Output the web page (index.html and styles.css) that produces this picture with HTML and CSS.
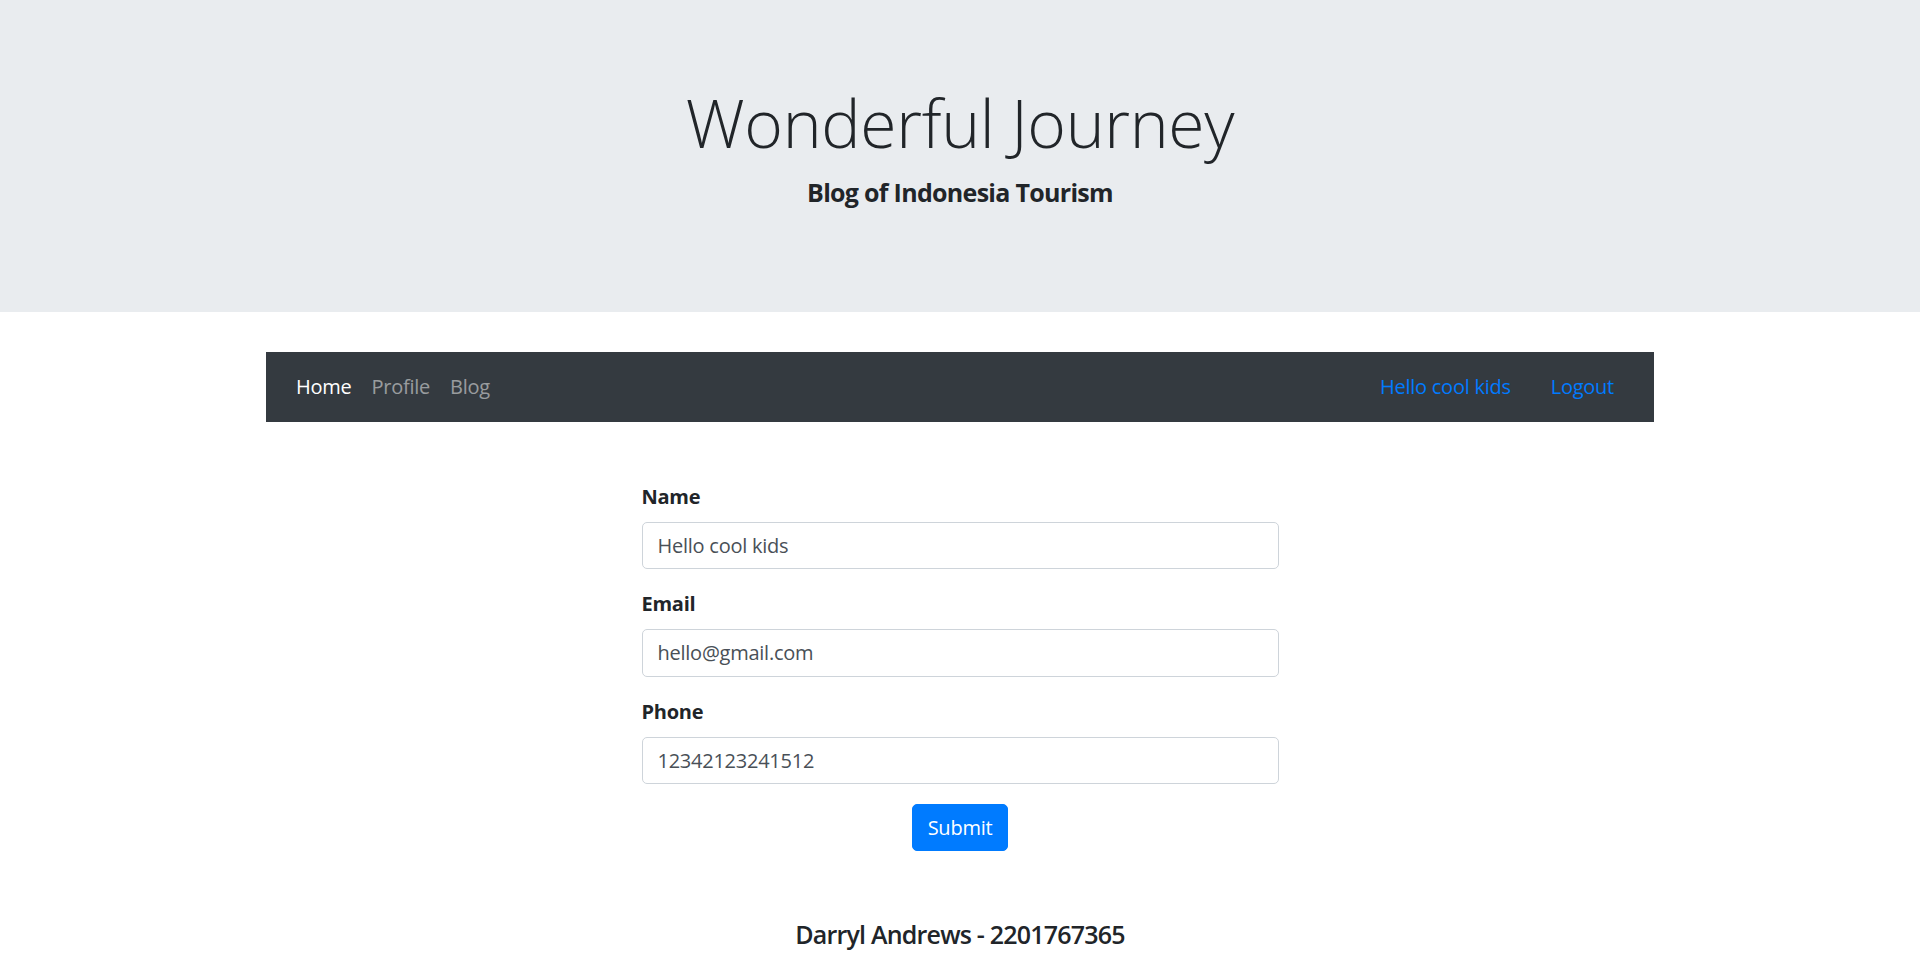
FILE: index.html
```html
<!DOCTYPE html>
<html lang="en">
<head>
<meta charset="utf-8">
<title>Wonderful Journey</title>
<link rel="stylesheet" href="styles.css">
</head>
<body>
<header class="jumbotron">
  <h1 class="display-title">Wonderful Journey</h1>
  <p class="lead"><b>Blog of Indonesia Tourism</b></p>
</header>
<div class="container">
  <nav class="navbar">
    <ul class="nav-list">
      <li><a class="nav-link active" href="#">Home</a></li>
      <li><a class="nav-link" href="#">Profile</a></li>
      <li><a class="nav-link" href="#">Blog</a></li>
    </ul>
    <ul class="nav-list nav-right">
      <li><a class="user-link" href="#">Hello cool kids</a></li>
      <li><a class="user-link" href="#">Logout</a></li>
    </ul>
  </nav>
  <form class="profile-form">
    <div class="form-group">
      <label class="form-label" for="name">Name</label>
      <input class="form-control" id="name" type="text" value="Hello cool kids">
    </div>
    <div class="form-group">
      <label class="form-label" for="email">Email</label>
      <input class="form-control" id="email" type="text" value="hello@gmail.com">
    </div>
    <div class="form-group">
      <label class="form-label" for="phone">Phone</label>
      <input class="form-control" id="phone" type="text" value="12342123241512">
    </div>
    <div class="form-actions">
      <button class="btn-primary" type="button">Submit</button>
    </div>
  </form>
  <footer class="footer">
    <h5 class="footer-text">Darryl Andrews - 2201767365</h5>
  </footer>
</div>
</body>
</html>
```
FILE: styles.css
```css
* { box-sizing: border-box; }
html, body { margin: 0; padding: 0; }
body {
  font-family: "Open Sans", "Noto Sans", "Liberation Sans", sans-serif;
  font-size: 20px;
  line-height: 1.5;
  letter-spacing: -0.25px;
  color: #212529;
  background: #fff;
}
.jumbotron {
  background: #e9ecef;
  padding: 80px 40px;
  margin: 0 0 40px;
  text-align: center;
}
.display-title {
  font-size: 66px;
  font-weight: 300;
  line-height: 84px;
  letter-spacing: -0.3px;
  margin: 0 0 10px;
}
.lead {
  font-size: 25px;
  line-height: 1.5;
  letter-spacing: -0.7px;
  margin: 0 0 20px;
}
.lead b { font-weight: 700; }
.container {
  width: 1388px;
  margin: 0 auto;
}
.navbar {
  display: flex;
  justify-content: space-between;
  align-items: center;
  background: #343a40;
  padding: 10px 20px;
}
.nav-list {
  display: flex;
  list-style: none;
  margin: 0;
  padding: 0;
}
.nav-link, .user-link {
  display: block;
  padding: 10px 10px;
  line-height: 30px;
  text-decoration: none;
  color: rgba(255,255,255,.5);
}
.nav-link.active { color: #fff; }
.user-link { color: #007bff; padding: 10px 20px; }
.profile-form {
  width: 637px;
  margin: 60px auto 0;
}
.form-group { margin-bottom: 20px; }
.form-label {
  display: block;
  font-weight: 700;
  line-height: 30px;
  margin-bottom: 10px;
}
.form-control {
  display: block;
  width: 100%;
  height: 47.5px;
  padding: 7.5px 15px;
  font-family: inherit;
  font-size: 20px;
  line-height: 30px;
  letter-spacing: -0.25px;
  color: #495057;
  background: #fff;
  border: 1.25px solid #ced4da;
  border-radius: 5px;
  outline: none;
}
.form-actions {
  display: flex;
  justify-content: center;
}
.btn-primary {
  font-family: inherit;
  font-size: 20px;
  line-height: 30px;
  letter-spacing: -0.25px;
  padding: 7.5px 15px;
  color: #fff;
  background: #007bff;
  border: 1.25px solid #007bff;
  border-radius: 5px;
}
.footer {
  padding-top: 68px;
  text-align: center;
}
.footer-text {
  font-size: 25px;
  font-weight: 600;
  line-height: 1.2;
  letter-spacing: -0.8px;
  margin: 0 0 10px;
}
```
